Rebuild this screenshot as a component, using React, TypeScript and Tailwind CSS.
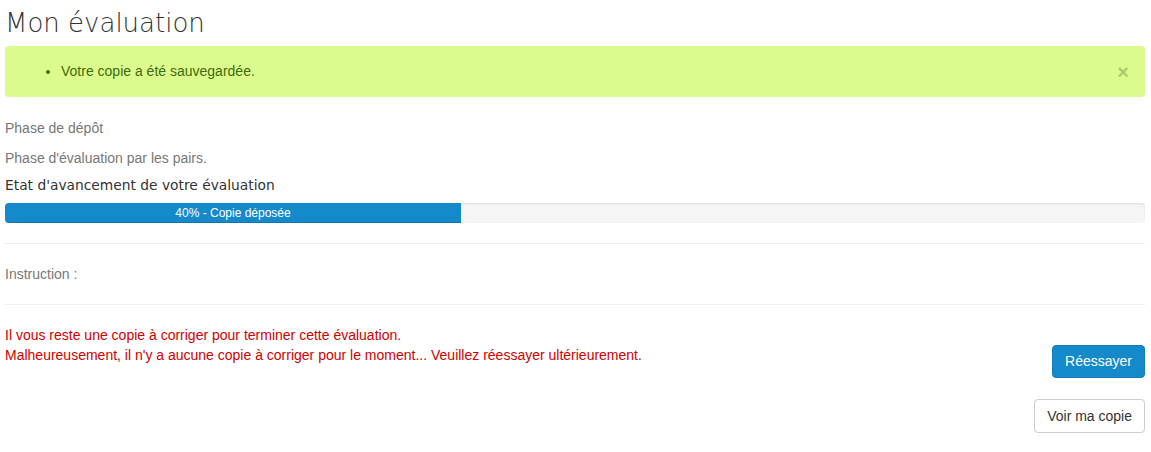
import React from "react";

export default function App() {
  return (
    <div className="w-[1151px] bg-white pl-[5px] pr-[6px]" style={{ fontFamily: '"Liberation Sans", Arial, sans-serif' }}>
      <h1 className="pt-[6px] text-[26px] leading-[34px] font-light text-[#333]" style={{ fontFamily: '"DejaVu Sans", sans-serif' }}>
        Mon évaluation
      </h1>
      <div className="mt-[6px] flex h-[51px] items-center justify-between rounded-[4px] bg-[#dbfc8c] pl-[42px] pr-[16px] text-[14px] text-[#3f6b0f]">
        <ul className="list-disc pl-[14px]">
          <li>Votre copie a été sauvegardée.</li>
        </ul>
        <span className="text-[20px] font-bold leading-none text-[#000] opacity-20">×</span>
      </div>
      <p className="mt-[21px] text-[14px] leading-[20px] text-[#777]">Phase de dépôt</p>
      <p className="mt-[10px] text-[14px] leading-[20px] text-[#777]">Phase d'évaluation par les pairs.</p>
      <p className="mt-[7px] text-[13.8px] leading-[20px] text-[#333]" style={{ fontFamily: '"DejaVu Sans", sans-serif' }}>
        Etat d'avancement de votre évaluation
      </p>
      <div className="mt-[8px] h-[20px] overflow-hidden rounded-[4px] bg-[#f5f5f5] shadow-[inset_0_1px_2px_rgba(0,0,0,0.1)]">
        <div className="flex h-full w-[40%] items-center justify-center bg-[#158acb] text-[12px] text-white shadow-[inset_0_-1px_0_rgba(0,0,0,0.15)]">
          40% - Copie déposée
        </div>
      </div>
      <hr className="mt-[20px] border-t border-[#eee]" />
      <p className="mt-[20px] text-[14px] leading-[20px] text-[#777]">Instruction :</p>
      <hr className="mt-[20px] border-t border-[#eee]" />
      <div className="mt-[20px] flex items-start justify-between">
        <div className="text-[14px] leading-[20px] text-[#d00000]">
          <p>Il vous reste une copie à corriger pour terminer cette évaluation.</p>
          <p>Malheureusement, il n'y a aucune copie à corriger pour le moment... Veuillez réessayer ultérieurement.</p>
        </div>
        <button className="mt-[20px] h-[33px] rounded-[4px] border border-[#137bb5] bg-[#158acb] px-[12px] text-[14px] text-white">
          Réessayer
        </button>
      </div>
      <div className="mt-[21px] flex justify-end">
        <button className="h-[34px] rounded-[4px] border border-[#ccc] bg-white px-[12px] text-[14px] text-[#333]">
          Voir ma copie
        </button>
      </div>
      <div className="h-[20px]" />
    </div>
  );
}
